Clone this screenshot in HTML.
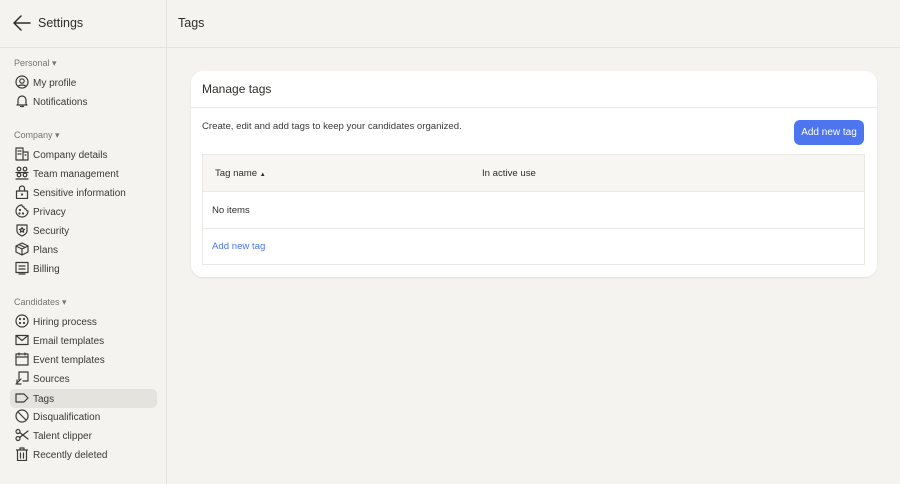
<!DOCTYPE html>
<html><head><style>
*{box-sizing:border-box;margin:0;padding:0}
body{width:900px;height:484px;background:#f4f3ef;font-family:"Liberation Sans",sans-serif;color:#2d2d2a;position:relative;overflow:hidden}
.side{position:absolute;left:0;top:0;width:167px;height:484px;border-right:1px solid #e5e3de}
.top{position:absolute;left:0;top:0;width:900px;height:48px;border-bottom:1px solid #e5e3de}
.t{position:absolute;white-space:nowrap}
.sec{font-size:9px;color:#77756f}
.it{font-size:10px;color:#3a3936;margin-top:1px}
svg.i{position:absolute;width:14px;height:14px;fill:none;stroke:#3a3a37;stroke-width:1.2;stroke-linecap:round;stroke-linejoin:round}
.card{position:absolute;left:191px;top:71px;width:686px;height:206px;background:#fff;border-radius:12px;box-shadow:0 1px 2px rgba(0,0,0,.08)}
</style></head><body>
<div class="side"></div><div class="top"></div>
<svg style="position:absolute;left:13px;top:15px;width:18px;height:16px" viewBox="0 0 18 16" fill="none" stroke="#2d2d2a" stroke-width="1.5" stroke-linecap="round"><path d="M17 8H1M8 1L1 8l7 7"/></svg>
<div class="t" style="left:38px;top:16px;font-size:12.5px">Settings</div>
<div class="t" style="left:178px;top:16px;font-size:12.5px">Tags</div>

<div class="t sec" style="left:14px;top:58px">Personal ▾</div>
<svg class="i" style="left:15px;top:75px" viewBox="0 0 14 14"><circle cx="7" cy="7" r="6"/><circle cx="7" cy="6" r="2.2"/><path d="M3 11.5c1.5-2 6.5-2 8 0"/></svg>
<div class="t it" style="left:33px;top:77px">My profile</div>
<svg class="i" style="left:15px;top:94px" viewBox="0 0 14 14"><path d="M3 10V6a4 4 0 018 0v4l1 1H2zM5.5 12.5h3"/></svg>
<div class="t it" style="left:33px;top:96px">Notifications</div>

<div class="t sec" style="left:14px;top:130px">Company ▾</div>
<svg class="i" style="left:15px;top:147px" viewBox="0 0 14 14"><path d="M1 13V1h7v12M8 5h5v8H1M3 4h1M5 4h1M3 7h1M5 7h1M10 8h1"/></svg>
<div class="t it" style="left:33px;top:149px">Company details</div>
<svg class="i" style="left:15px;top:166px" viewBox="0 0 14 14"><circle cx="4" cy="3" r="1.8"/><circle cx="10" cy="3" r="1.8"/><circle cx="4" cy="9" r="1.8"/><circle cx="10" cy="9" r="1.8"/><path d="M1 6.5h6M7 6.5h6M1 13h6M7 13h6"/></svg>
<div class="t it" style="left:33px;top:168px">Team management</div>
<svg class="i" style="left:15px;top:185px" viewBox="0 0 14 14"><rect x="1.5" y="6" width="11" height="7.5"/><path d="M4.5 6V3.5a2.5 2.5 0 015 0V6"/><circle cx="7" cy="9.5" r=".5"/></svg>
<div class="t it" style="left:33px;top:187px">Sensitive information</div>
<svg class="i" style="left:15px;top:204px" viewBox="0 0 14 14"><path d="M7 1a6 6 0 106 6 2 2 0 01-2-2 2 2 0 01-2-2 2 2 0 01-2-2z"/><circle cx="5" cy="6" r=".5"/><circle cx="8" cy="9.5" r=".5"/><circle cx="4.5" cy="9.5" r=".5"/></svg>
<div class="t it" style="left:33px;top:206px">Privacy</div>
<svg class="i" style="left:15px;top:223px" viewBox="0 0 14 14"><path d="M2 2h10v6c0 3-5 5-5 5s-5-2-5-5z"/><path d="M7 4.5l.8 1.6 1.7.2-1.3 1.2.4 1.7L7 8.4l-1.6.8.4-1.7-1.3-1.2 1.7-.2z"/></svg>
<div class="t it" style="left:33px;top:225px">Security</div>
<svg class="i" style="left:15px;top:242px" viewBox="0 0 14 14"><path d="M7 1l6 3v6l-6 3-6-3V4zM1 4l6 3 6-3M7 7v6M4 2.5l6 3"/></svg>
<div class="t it" style="left:33px;top:244px">Plans</div>
<svg class="i" style="left:15px;top:261px" viewBox="0 0 14 14"><rect x="1" y="1.5" width="12" height="10"/><path d="M4 5h6M4 8h6M4 13h6"/></svg>
<div class="t it" style="left:33px;top:263px">Billing</div>

<div class="t sec" style="left:14px;top:297px">Candidates ▾</div>
<svg class="i" style="left:15px;top:314px" viewBox="0 0 14 14"><circle cx="7" cy="7" r="6"/><circle cx="5" cy="5" r=".5"/><circle cx="9" cy="5" r=".5"/><circle cx="5" cy="9" r=".5"/><circle cx="9" cy="9" r=".5"/></svg>
<div class="t it" style="left:33px;top:316px">Hiring process</div>
<svg class="i" style="left:15px;top:333px" viewBox="0 0 14 14"><rect x="1" y="2.5" width="12" height="9"/><path d="M1 2.5l6 5 6-5"/></svg>
<div class="t it" style="left:33px;top:335px">Email templates</div>
<svg class="i" style="left:15px;top:352px" viewBox="0 0 14 14"><rect x="1" y="2" width="12" height="11"/><path d="M1 5h12M4 1v2M10 1v2"/></svg>
<div class="t it" style="left:33px;top:354px">Event templates</div>
<svg class="i" style="left:15px;top:371px" viewBox="0 0 14 14"><path d="M4 9V1h9v9H8M1 13l5-5M2 9v4h4"/></svg>
<div class="t it" style="left:33px;top:373px">Sources</div>
<div style="position:absolute;left:10px;top:389px;width:147px;height:19px;background:#e5e3de;border-radius:5px"></div>
<svg class="i" style="left:15px;top:391px" viewBox="0 0 14 14"><path d="M1 3h8l4 4-4 4H1z"/></svg>
<div class="t it" style="left:33px;top:393px">Tags</div>
<svg class="i" style="left:15px;top:409px" viewBox="0 0 14 14"><circle cx="7" cy="7" r="6"/><path d="M3 3l8 8"/></svg>
<div class="t it" style="left:33px;top:411px">Disqualification</div>
<svg class="i" style="left:15px;top:428px" viewBox="0 0 14 14"><circle cx="3" cy="3.5" r="2"/><circle cx="3" cy="10.5" r="2"/><path d="M4.7 4.5L13 11M4.7 9.5L13 3"/></svg>
<div class="t it" style="left:33px;top:430px">Talent clipper</div>
<svg class="i" style="left:15px;top:447px" viewBox="0 0 14 14"><path d="M1.5 3h11M5 3V1h4v2M2.5 3v10.5h9V3M5.5 6v5M8.5 6v5"/></svg>
<div class="t it" style="left:33px;top:449px">Recently deleted</div>

<div class="card">
<div class="t" style="left:11px;top:11px;font-size:12px">Manage tags</div>
<div style="position:absolute;left:0;top:36px;width:686px;border-top:1px solid #ebe9e5"></div>
<div class="t" style="left:11px;top:50px;font-size:9.6px;color:#3a3a37">Create, edit and add tags to keep your candidates organized.</div>
<div class="t" style="left:603px;top:49px;width:70px;height:25px;background:#4c75ef;border-radius:6px;color:#fff;font-size:10px;text-align:center;line-height:26px">Add new tag</div>
<div style="position:absolute;left:11px;top:83px;width:663px;height:111px;border:1px solid #ebe9e5">
<div style="height:37px;background:#f7f6f3;border-bottom:1px solid #ebe9e5"></div>
<div style="height:37px;border-bottom:1px solid #ebe9e5"></div>
<div class="t" style="left:12px;top:13px;font-size:9.6px">Tag name <span style="font-size:6px">▲</span></div>
<div class="t" style="left:279px;top:13px;font-size:9.6px">In active use</div>
<div class="t" style="left:9px;top:50px;font-size:9.6px">No items</div>
<div class="t" style="left:9px;top:86px;font-size:9.6px;color:#4c75ef">Add new tag</div>
</div>
</div>
</body></html>
